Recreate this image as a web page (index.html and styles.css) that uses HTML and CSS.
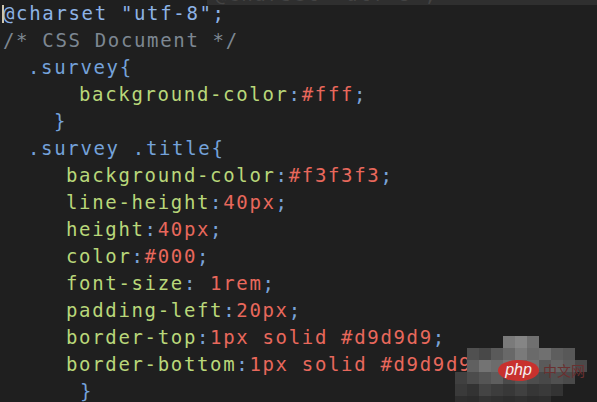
FILE: index.html
```html
<!DOCTYPE html>
<html>
<head>
<meta charset="utf-8">
<link rel="stylesheet" href="styles.css">
</head>
<body>
<div class="editor">
  <div class="code">
    <div class="ln i0"><span class="at">@charset "utf-8";</span></div>
    <div class="ln i0"><span class="cm">/* CSS Document */</span></div>
    <div class="ln i1"><span class="sel">.survey{</span></div>
    <div class="ln i2"><span class="pr">background-color</span><span class="pu">:</span><span class="va">#fff</span><span class="pu">;</span></div>
    <div class="ln i3"><span class="sel">}</span></div>
    <div class="ln i1"><span class="sel">.survey .title{</span></div>
    <div class="ln i4"><span class="pr">background-color</span><span class="pu">:</span><span class="va">#f3f3f3</span><span class="pu">;</span></div>
    <div class="ln i4"><span class="pr">line-height</span><span class="pu">:</span><span class="va">40px</span><span class="pu">;</span></div>
    <div class="ln i4"><span class="pr">height</span><span class="pu">:</span><span class="va">40px</span><span class="pu">;</span></div>
    <div class="ln i4"><span class="pr">color</span><span class="pu">:</span><span class="va">#000</span><span class="pu">;</span></div>
    <div class="ln i4"><span class="pr">font-size</span><span class="pu">: </span><span class="va">1rem</span><span class="pu">;</span></div>
    <div class="ln i4"><span class="pr">padding-left</span><span class="pu">:</span><span class="va">20px</span><span class="pu">;</span></div>
    <div class="ln i4"><span class="pr">border-top</span><span class="pu">:</span><span class="va">1px solid #d9d9d9</span><span class="pu">;</span></div>
    <div class="ln i4"><span class="pr">border-bottom</span><span class="pu">:</span><span class="va">1px solid #d9d9d9</span><span class="pu">;</span></div>
    <div class="ln i5"><span class="sel">}</span></div>
  </div>
  <div class="topband"><span class="ghost">@charset "utf-8";</span></div>
  <div class="cursor"></div>
  <div class="watermark">
    <div class="tiles">
      <i></i><i></i><i></i><i></i><i style="background:#7a7a7a"></i><i style="background:#858585"></i><i style="background:#707070"></i><i></i><i></i><i></i><i></i><i></i>
      <i></i><i style="background:#505050"></i><i style="background:#484848"></i><i style="background:#5a5a5a"></i><i style="background:#686868"></i><i style="background:#7a7a7a"></i><i style="background:#6a6a6a"></i><i style="background:#707070"></i><i style="background:#5e5e5e"></i><i style="background:#585858"></i><i></i><i></i>
      <i></i><i style="background:#606060"></i><i style="background:#737373"></i><i style="background:#6c6c6c"></i><i style="background:#777777"></i><i style="background:#6a6a6a"></i><i style="background:#737373"></i><i style="background:#5a5a5a"></i><i style="background:#666666"></i><i style="background:#5c5c5c"></i><i style="background:#4a4a4a"></i><i></i>
      <i style="background:#404040"></i><i style="background:#4c4c4c"></i><i style="background:#555555"></i><i style="background:#5e5e5e"></i><i style="background:#4a4a4a"></i><i style="background:#555555"></i><i style="background:#4d4d4d"></i><i style="background:#484848"></i><i style="background:#505050"></i><i style="background:#4a4a4a"></i><i></i><i></i>
      <i style="background:#3a3a3a"></i><i style="background:#333333"></i><i style="background:#444444"></i><i style="background:#3d3d3d"></i><i style="background:#383838"></i><i style="background:#404040"></i><i style="background:#363636"></i><i style="background:#3a3a3a"></i><i style="background:#333333"></i><i></i><i></i><i></i>
      <i style="background:#2e2e2e"></i><i style="background:#2c2c2c"></i><i style="background:#333333"></i><i style="background:#303030"></i><i style="background:#2d2d2d"></i><i style="background:#303030"></i><i style="background:#2c2c2c"></i><i style="background:#2e2e2e"></i><i></i><i></i><i></i><i></i>
    </div>
    <div class="pill">php</div>
    <div class="cn">中文网</div>
  </div>
</div>
</body>
</html>
```

FILE: styles.css
```css
html, body {
  margin: 0;
  padding: 0;
  background: #1e1e1e;
}

.editor {
  position: relative;
  width: 597px;
  height: 402px;
  overflow: hidden;
  background: #1f1f1f;
}

.code {
  font-family: "DejaVu Sans Mono", monospace;
  font-size: 19px;
  letter-spacing: 1.66px;
  line-height: 27px;
}

.ln {
  height: 27px;
  white-space: pre;
}
.i0 { padding-left: 3px; }
.i1 { padding-left: 28px; }
.i2 { padding-left: 79px; }
.i3 { padding-left: 54px; }
.i4 { padding-left: 66px; }
.i5 { padding-left: 80px; }

.at { color: #8db3e6; }
.cm { color: #7d8792; }
.sel { color: #74a2da; }
.pr { color: #b9d77a; }
.pu { color: #7aa3d8; }
.va { color: #e8685c; }

.topband {
  position: absolute;
  left: 207px;
  top: 0;
  width: 390px;
  height: 5px;
  background: #2f2f2f;
  overflow: hidden;
}

.ghost {
  position: absolute;
  left: 8px;
  top: -19px;
  font-family: "DejaVu Sans Mono", monospace;
  font-size: 19px;
  letter-spacing: 1.66px;
  line-height: 27px;
  white-space: pre;
  color: #444444;
}

.cursor {
  position: absolute;
  left: 2px;
  top: 5px;
  width: 2px;
  height: 18px;
  background: #cfc6ae;
}

.watermark {
  position: absolute;
  left: 455px;
  top: 336px;
  width: 144px;
  height: 72px;
}

.tiles {
  display: grid;
  grid-template-columns: repeat(12, 12px);
  grid-template-rows: repeat(6, 12px);
  filter: blur(0.6px);
}

.tiles i { display: block; }

.pill {
  position: absolute;
  left: 43px;
  top: 24px;
  width: 41px;
  height: 21px;
  border-radius: 50%;
  background: #c8312e;
  color: #f4f0f0;
  font-family: "Liberation Sans", sans-serif;
  font-style: italic;
  font-size: 16px;
  line-height: 20px;
  text-align: center;
}

.cn {
  position: absolute;
  left: 88px;
  top: 24px;
  font-family: "Noto Sans CJK SC", sans-serif;
  font-size: 14px;
  line-height: 20px;
  color: #6a3030;
}
```
